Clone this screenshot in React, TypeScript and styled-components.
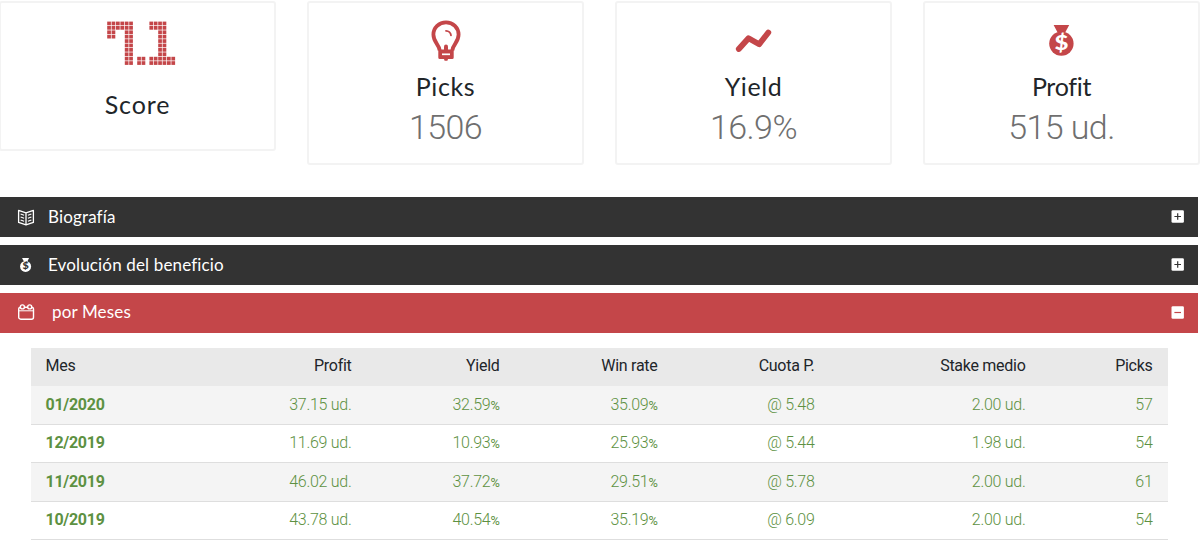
import React from 'react';
import styled, { createGlobalStyle } from 'styled-components';

const colors = {
  red: '#c44649',
  dark: '#333333',
  green: '#5d9142',
  grey: '#6f6f6f',
};

const GlobalStyle = createGlobalStyle`
  * {
    box-sizing: border-box;
  }
  body {
    margin: 0;
    background: #fff;
    color: #212529;
    font-family: Roboto, sans-serif;
    overflow: hidden;
  }
`;

const Page = styled.main`
  width: 1200px;
  height: 542px;
  overflow: hidden;
`;

const Cards = styled.section`
  display: grid;
  grid-template-columns: repeat(4, 277px);
  column-gap: 31px;
  align-items: start;
  height: 197px;
  margin-left: -1px;
  padding-top: 1px;
`;

const Card = styled.div<{ $short?: boolean }>`
  display: flex;
  flex-direction: column;
  align-items: center;
  height: ${(p) => (p.$short ? 150 : 164)}px;
  padding-top: ${(p) => (p.$short ? 18 : 17)}px;
  border: 2px solid #f3f3f3;
  border-radius: 3px;
`;

const CardIcon = styled.div<{ $height?: number }>`
  display: flex;
  align-items: flex-start;
  justify-content: center;
  height: ${(p) => p.$height || 42}px;
  svg {
    display: block;
  }
`;

const CardTitle = styled.h3<{ $tracking: number }>`
  margin: 8px 0 0;
  font-family: Lato, sans-serif;
  font-weight: 400;
  font-size: 25px;
  line-height: 32px;
  letter-spacing: ${(p) => p.$tracking}px;
`;

const CardValue = styled.div`
  color: ${colors.grey};
  font-weight: 300;
  font-size: 34px;
  line-height: 40px;
  letter-spacing: -0.6px;
  margin-top: 5px;
`;

const Accordion = styled.section`
  width: 1198px;
  display: flex;
  flex-direction: column;
  gap: 8px;
`;

const AccordionHeader = styled.button<{ $active?: boolean }>`
  display: flex;
  align-items: center;
  width: 100%;
  height: 40px;
  padding: 0 14px ${(p) => (p.$active ? 2 : 0)}px 17px;
  border: 0;
  color: #fff;
  background: ${(p) => (p.$active ? colors.red : colors.dark)};
  text-align: left;
  svg {
    display: block;
    flex: none;
  }
`;

const AccordionTitle = styled.span<{ $indent?: boolean }>`
  flex: 1;
  padding-left: ${(p) => (p.$indent ? 17 : 13)}px;
  font-family: Lato, sans-serif;
  font-size: 17px;
  line-height: 24px;
  letter-spacing: 0.15px;
`;

const ToggleSlot = styled.span<{ $open?: boolean }>`
  padding-bottom: ${(p) => (p.$open ? 0 : 2)}px;
`;

const Table = styled.table`
  width: 1137px;
  margin: 15px 0 0 31px;
  border-collapse: separate;
  border-spacing: 0;
  table-layout: fixed;
  font-size: 16px;
  letter-spacing: -0.28px;
`;

const Th = styled.th<{ $width: number }>`
  width: ${(p) => p.$width}px;
  height: 38px;
  padding: 0 15.5px 3px 14.5px;
  background: #e9e9e9;
  font-weight: 400;
  text-align: right;
  &:first-child {
    text-align: left;
  }
`;

const Td = styled.td`
  height: 38.5px;
  padding: 0 15.5px 1px 14.5px;
  border-bottom: 1px solid #dedede;
  color: ${colors.green};
  font-weight: 300;
  text-align: right;
  &:first-child {
    font-weight: 700;
    text-align: left;
  }
  small {
    font-size: 80%;
    font-weight: 400;
  }
`;

const Tr = styled.tr`
  &:nth-child(odd) {
    background: #f4f4f4;
  }
`;

const SEVEN = ['111111', '111111', '110011', '110011', '000011', '000011', '000011', '000011', '000011', '000011'];
const DOT = ['', '', '', '', '', '', '', '', '11', '11'];
const ONE = ['111100', '111100', '001100', '001100', '001100', '001100', '001100', '001100', '111111', '111111'];

const Digit = ({ rows, x }: { rows: string[]; x: number }) => (
  <>
    {rows.map((row, r) =>
      row.split('').map((on, c) =>
        on === '1' ? <rect key={`${r}-${c}`} x={x + c * 4.4} y={0.6 + r * 4.4} width="3.7" height="3.7" /> : null,
      ),
    )}
  </>
);

const Score = () => (
  <svg width="78" height="46" viewBox="0 0 78 46" fill={colors.red} role="img" aria-label="7.1">
    <Digit rows={SEVEN} x={8.2} />
    <Digit rows={DOT} x={38.2} />
    <Digit rows={ONE} x={50.4} />
  </svg>
);

const Bulb = () => (
  <svg width="30" height="42" viewBox="0 0 30 42" fill="none" stroke={colors.red}>
    <path
      d="M8.7 30.5C8.2 24.5 2.4 22.5 2.4 14.6A12.6 12.3 0 0 1 27.6 14.6C27.6 22.5 21.8 24.5 21.3 30.5"
      strokeWidth="3.8"
    />
    <path d="M15 10.8A5.2 5 0 0 1 20 15.4" strokeWidth="1.8" strokeLinecap="round" />
    <path d="M7.3 29.5h15.4v8q0 1.5-1.5 1.5H17l-.6 1.8h-2.8L13 39H8.8q-1.5 0-1.5-1.5z" fill={colors.red} stroke="none" />
    <path d="M15 26.5v4" strokeWidth="4" strokeLinecap="round" />
    <path d="M11 34.3h8" stroke="#fff" strokeWidth="1.7" />
  </svg>
);

const Trend = () => (
  <svg width="38" height="42" viewBox="0 0 38 42" fill="none" stroke={colors.red}>
    <path d="M3.8 29L13.5 18.2L24.2 24.2L33.3 12.5" strokeWidth="5.8" strokeLinecap="round" strokeLinejoin="round" />
  </svg>
);

const MoneyBag = ({ size, color, sign }: { size: number; color: string; sign: string }) => (
  <svg width={size * 0.8} height={size} viewBox="0 0 24.8 31" fill={color}>
    <path d="M4.6 0h15.6l-4 7.5H8.6z" />
    <circle cx="12.4" cy="18.6" r="12.2" />
    <text
      transform="translate(12.4 25.4) scale(1.2 1)"
      fill={sign}
      fontFamily="Lato, sans-serif"
      fontSize="20"
      fontWeight="900"
      textAnchor="middle"
    >
      $
    </text>
  </svg>
);

const BagSlot = styled.div`
  padding-top: 5px;
`;

const Book = () => (
  <svg width="18" height="17" viewBox="0 0 18 17" fill="none" stroke="#fff" strokeWidth="1.3">
    <path d="M9 3.8L1.6 1.4v12L9 15.8l7.4-2.4v-12zM9 3.8v12" strokeLinejoin="round" />
    <path
      d="M3.6 5l3.5 1.2M3.6 8l3.5 1.2M3.6 11l3.5 1.2M14.4 5l-3.5 1.2M14.4 8l-3.5 1.2M14.4 11l-3.5 1.2"
      strokeWidth="1.1"
    />
  </svg>
);

const Calendar = () => (
  <svg width="18" height="18" viewBox="0 0 18 18" fill="none" stroke="#fff" strokeWidth="1.4">
    <rect x="1.7" y="4.2" width="14.8" height="12" rx="2" />
    <path d="M2 7.8h14" strokeWidth="1" />
    <circle cx="5.4" cy="3.9" r="2" fill={colors.red} />
    <circle cx="12.7" cy="3.9" r="2" fill={colors.red} />
  </svg>
);

const Toggle = ({ open }: { open?: boolean }) => (
  <ToggleSlot $open={open}>
    <svg width="13" height="13" viewBox="0 0 13 13">
      <rect x="0.5" y="0.3" width="12.4" height="12.4" rx="1.3" fill="#fff" />
      <path
        d={open ? 'M3.4 6.5h6.6' : 'M3.4 6.5h6.6M6.7 3.2v6.6'}
        stroke={open ? colors.red : colors.dark}
        strokeWidth="1.2"
      />
    </svg>
  </ToggleSlot>
);

const IconSlot = styled.span`
  display: flex;
  justify-content: center;
  width: 18px;
`;

const columns = [
  { label: 'Mes', width: 185 },
  { label: 'Profit', width: 151 },
  { label: 'Yield', width: 148 },
  { label: 'Win rate', width: 158 },
  { label: 'Cuota P.', width: 157 },
  { label: 'Stake medio', width: 211 },
  { label: 'Picks', width: 127 },
];

const months = [
  { month: '01/2020', profit: '37.15', yield: '32.59', winRate: '35.09', odds: '5.48', stake: '2.00', picks: 57 },
  { month: '12/2019', profit: '11.69', yield: '10.93', winRate: '25.93', odds: '5.44', stake: '1.98', picks: 54 },
  { month: '11/2019', profit: '46.02', yield: '37.72', winRate: '29.51', odds: '5.78', stake: '2.00', picks: 61 },
  { month: '10/2019', profit: '43.78', yield: '40.54', winRate: '35.19', odds: '6.09', stake: '2.00', picks: 54 },
];

const App = () => (
  <Page>
    <GlobalStyle />
    <Cards>
      <Card $short>
        <CardIcon $height={59}>
          <Score />
        </CardIcon>
        <CardTitle $tracking={0.9}>Score</CardTitle>
      </Card>
      <Card>
        <CardIcon>
          <Bulb />
        </CardIcon>
        <CardTitle $tracking={0.6}>Picks</CardTitle>
        <CardValue>1506</CardValue>
      </Card>
      <Card>
        <CardIcon>
          <Trend />
        </CardIcon>
        <CardTitle $tracking={0.6}>Yield</CardTitle>
        <CardValue>16.9%</CardValue>
      </Card>
      <Card>
        <CardIcon>
          <BagSlot>
            <MoneyBag size={31} color={colors.red} sign="#fff" />
          </BagSlot>
        </CardIcon>
        <CardTitle $tracking={-0.3}>Profit</CardTitle>
        <CardValue>515 ud.</CardValue>
      </Card>
    </Cards>

    <Accordion>
      <AccordionHeader>
        <IconSlot>
          <Book />
        </IconSlot>
        <AccordionTitle>Biografía</AccordionTitle>
        <Toggle />
      </AccordionHeader>
      <AccordionHeader>
        <IconSlot>
          <MoneyBag size={14} color="#fff" sign={colors.dark} />
        </IconSlot>
        <AccordionTitle>Evolución del beneficio</AccordionTitle>
        <Toggle />
      </AccordionHeader>
      <AccordionHeader $active>
        <IconSlot>
          <Calendar />
        </IconSlot>
        <AccordionTitle $indent>por Meses</AccordionTitle>
        <Toggle open />
      </AccordionHeader>
    </Accordion>

    <Table>
      <thead>
        <tr>
          {columns.map((c) => (
            <Th key={c.label} $width={c.width}>
              {c.label}
            </Th>
          ))}
        </tr>
      </thead>
      <tbody>
        {months.map((m) => (
          <Tr key={m.month}>
            <Td>{m.month}</Td>
            <Td>{m.profit} ud.</Td>
            <Td>
              {m.yield}
              <small>%</small>
            </Td>
            <Td>
              {m.winRate}
              <small>%</small>
            </Td>
            <Td>@ {m.odds}</Td>
            <Td>{m.stake} ud.</Td>
            <Td>{m.picks}</Td>
          </Tr>
        ))}
      </tbody>
    </Table>
  </Page>
);

export default App;
